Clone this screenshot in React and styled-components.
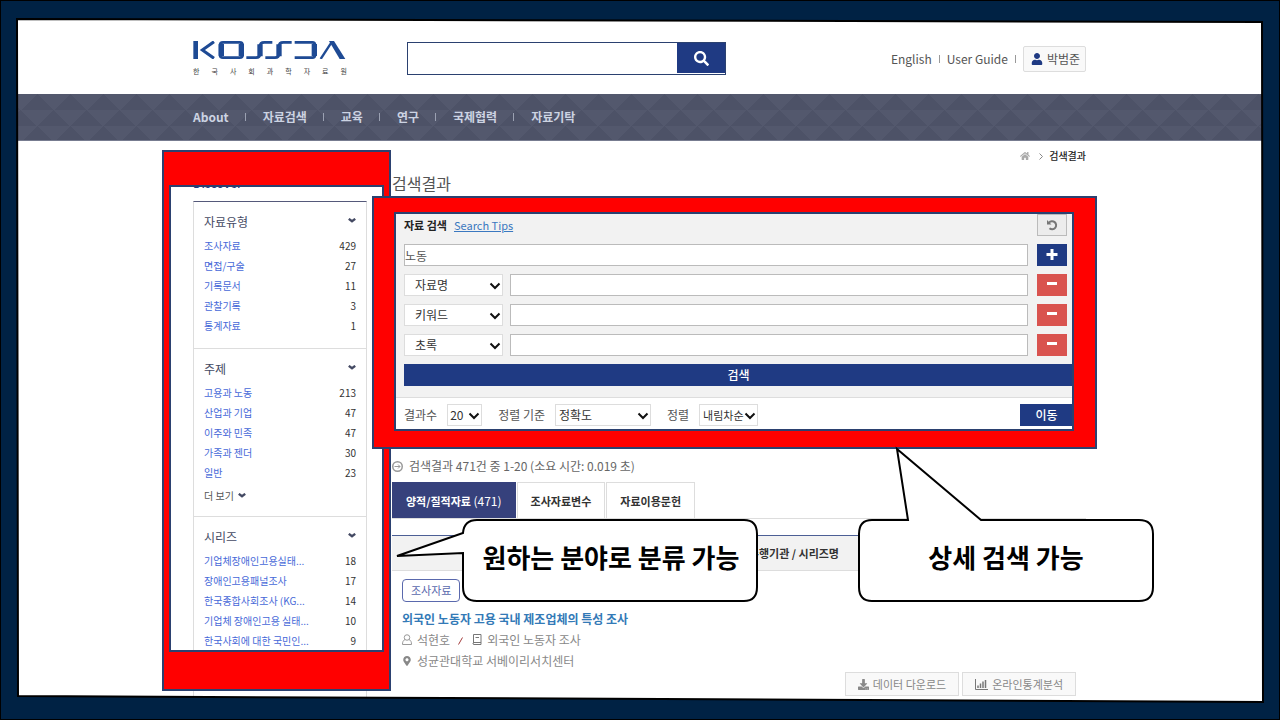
import React from "react";
import styled, { createGlobalStyle, css } from "styled-components";
import { FaSearch, FaUser, FaHome, FaDownload, FaMapMarkerAlt } from "react-icons/fa";

const navy = "#1f3a83";
const line = "#2b4170";

const Global = createGlobalStyle`
  *, *::before, *::after { box-sizing: border-box; }
  body { margin: 0; background: #002244; font-family: "Noto Sans CJK KR", sans-serif; font-size: 12px; line-height: 20px; color: #555; }
  button, input, select { font: inherit; color: inherit; margin: 0; padding: 0; border-radius: 0; }
  a { color: inherit; text-decoration: none; }
  ul { list-style: none; margin: 0; padding: 0; }
  h1, h2, h3, p { margin: 0; font-weight: 400; font-size: inherit; }
  svg { display: block; flex: none; }
`;

const Slide = styled.div`
  position: relative;
  display: flex;
  min-height: 100vh;
  padding: 18px;
  overflow: hidden;
`;
const Sheet = styled.div`
  flex: 1;
  display: flex;
  flex-direction: column;
  min-width: 0;
  background: #fff;
`;
const FrameArt = styled.svg`
  position: absolute;
  inset: 0;
  width: 100%;
  height: 100%;
  pointer-events: none;
  z-index: 5;
`;
const Container = styled.div`
  width: 100%;
  max-width: 894px;
  margin: 0 auto;
`;

const Header = styled.header`
  padding: 23px 0 18px;
`;
const HeaderRow = styled(Container)`
  display: flex;
  align-items: center;
  padding-right: 1px;
`;
const Brand = styled.a`
  width: 154px;
  margin-right: 60px;
`;
const BrandCaption = styled.span`
  display: flex;
  justify-content: space-between;
  margin-top: 7px;
  font-size: 7px;
  line-height: 10px;
  color: #444;
`;
const SiteSearch = styled.form`
  display: flex;
  align-items: flex-start;
  width: 319px;
  height: 33px;
  border: 1px solid ${line};
  input { flex: 1; min-width: 0; height: 31px; border: 0; padding: 0 8px; outline: 0; }
  button { width: 48px; height: 30px; border: 0; background: ${navy}; color: #fff; display: grid; place-items: center; }
`;
const Utility = styled.nav`
  display: flex;
  align-items: center;
  gap: 7px;
  margin-left: auto;
`;
const Tick = styled.i`
  width: 1px;
  height: 8px;
  margin-right: ${(p) => (p.$light ? 1 : 0)}px;
  background: ${(p) => (p.$light ? "#9ba1b2" : "#999")};
`;
const UserButton = styled.button`
  display: flex;
  align-items: center;
  gap: 4px;
  height: 26px;
  padding: 0 5px 0 7px;
  border: 1px solid #ddd;
  border-radius: 2px;
  background: #f9f9f9;
  svg { color: ${navy}; }
`;

const NavBar = styled.nav`
  --tri: conic-gradient(from 135deg at 50% 0, #4d5267 90deg, transparent 0);
  background-color: #53586d;
  background-image: var(--tri), var(--tri), var(--tri);
  background-size: 33px 16px;
  background-position: 3px 0, 19px 16px, 3px 32px;
  background-repeat: repeat-x;
  border-bottom: 1px solid #777c90;
`;
const NavRow = styled(Container)`
  display: flex;
  align-items: center;
  gap: 16px;
  height: 46px;
  font-weight: 700;
  color: #ccd3e2;
`;

const Crumbs = styled(Container)`
  display: flex;
  justify-content: flex-end;
  align-items: center;
  gap: 6px;
  padding: 5px 1px 0 0;
  font-size: 10px;
  color: #222;
  font-weight: 500;
  a { margin-right: 3px; color: #aaa; }
`;
const Body = styled(Container)`
  display: flex;
  gap: 25px;
  flex: 1;
`;

const Sidebar = styled.aside`
  position: relative;
  display: flex;
  flex-direction: column;
  width: 174px;
  padding-top: 7px;
`;
const SideTitle = styled.h2`
  height: 28px;
  font-weight: 500;
  color: ${navy};
`;
const FacetBox = styled.div`
  flex: 1;
  border: 1px solid #ddd;
  border-top-color: #55597a;
  border-bottom: 0;
`;
const Facet = styled.section`
  padding: 8px 10px 12px;
  border-bottom: 1px solid #ddd;
  &:last-child { border-bottom: 0; }
`;
const FacetHead = styled.h3`
  display: flex;
  justify-content: space-between;
  align-items: center;
  height: 24px;
  margin-bottom: 2px;
  color: #444a63;
  svg { margin-bottom: 4px; }
`;
const FacetRow = styled.li`
  display: flex;
  justify-content: space-between;
  font-size: 10px;
  color: #333;
  a { color: #4668d8; }
`;
const More = styled.button`
  display: flex;
  align-items: center;
  gap: 4px;
  height: 23px;
  margin-bottom: -2px;
  padding-top: 2px;
  border: 0;
  background: none;
  font-size: 10px;
`;

const Main = styled.main`
  position: relative;
  flex: 1;
  min-width: 0;
  padding-right: 1px;
`;
const PageTitle = styled.h1`
  height: 47px;
  padding-top: 7px;
  font-size: 16px;
`;

/* Red highlight frame with a dark outline on both edges */
const Highlight = styled.div`
  position: absolute;
  z-index: ${(p) => p.$z};
  border: solid #f00;
  outline: 2px solid ${line};
  pointer-events: none;
  box-shadow: inset 0 0 0 2px ${line};
`;
const FacetHighlight = styled(Highlight)`
  top: -14px;
  left: -29px;
  right: -22px;
  height: 537px;
  border-width: 33px 5px 37px;
`;
const SearchHighlight = styled(Highlight)`
  inset: -15px -9px -16px -18px;
  border-width: 14px 21px 16px 20px;
`;

const SearchPanel = styled.form`
  position: relative;
  height: 218px;
  background: #f2f2f2;
`;
const Fields = styled.div`
  display: flex;
  flex-direction: column;
  gap: 8px;
  padding: 1px 13px 11px 12px;
`;
const Row = styled.div`
  display: flex;
  align-items: center;
  gap: 7px;
  height: 22px;
  padding-right: 6px;
`;
const PanelTitle = styled(Row)`
  font-size: 11px;
  color: #222;
  font-weight: 700;
  a { color: #3a78c0; text-decoration: underline; font-weight: 400; margin-right: auto; }
`;
const Input = styled.input`
  flex: 1;
  min-width: 0;
  height: 22px;
  border: 1px solid #bbb;
  background: #fff;
  outline: 0;
`;
const Square = styled.button`
  display: grid;
  place-items: center;
  width: 30px;
  height: 22px;
  margin-left: 2px;
  border: 1px solid ${(p) => (p.$tone === "reset" ? "#bbb" : "transparent")};
  color: ${(p) => (p.$tone === "reset" ? "#777" : "#fff")};
  background: ${(p) => ({ reset: "#ececec", add: navy, remove: "#d9534f" })[p.$tone]};
`;
const Submit = styled.button`
  display: block;
  height: 22px;
  border: 0;
  background: ${navy};
  color: #fff;
  font-weight: 500;
  ${(p) => p.$end && css`width: 53px; margin-left: auto;`}
`;
const SelectBox = styled.span`
  position: relative;
  display: block;
  width: ${(p) => p.$w}px;
  select {
    appearance: none;
    width: 100%;
    height: 22px;
    padding-left: ${(p) => p.$pad}px;
    border: 1px solid #ddd;
    background: #fff;
    color: #333;
    font-size: ${(p) => (p.$small ? 11 : 12)}px;
    line-height: 18px;
    outline: 0;
  }
  svg { position: absolute; right: 2px; top: 8px; pointer-events: none; }
`;
const SortRow = styled.div`
  display: flex;
  align-items: center;
  height: 34px;
  padding: 0 13px 0 12px;
  border-top: 1px solid #ddd;
  background: #fff;
  label { margin-right: 10px; }
  span { margin-right: 16px; }
`;

const Count = styled.p`
  display: flex;
  gap: 6px;
  align-items: center;
  padding: 25px 0 6px;
  color: #666;
`;
const Tabs = styled.div`
  display: flex;
  gap: 1px;
  border-bottom: 1px solid #ddd;
`;
const Tab = styled.button`
  height: 36px;
  padding: 0 12px;
  border: 1px solid ${(p) => (p.$on ? "#36417c" : "#ddd")};
  border-bottom: 0;
  background: ${(p) => (p.$on ? "#36417c" : "#fff")};
  color: ${(p) => (p.$on ? "#fff" : "#333")};
  font-size: 11px;
  padding: 0 13px;
  font-weight: 700;
  span { font-size: 12px; font-weight: 400; }
`;
const Results = styled.table`
  width: 100%;
  margin-top: 16px;
  border-collapse: collapse;
  th {
    height: 35px;
    padding: 0 247px 0 0;
    border-top: 1px solid #4c5f95;
    border-bottom: 1px solid #ddd;
    background: #f2f2f2;
    color: #333;
    font-size: 11px;
    font-weight: 700;
    text-align: right;
  }
  td { padding: 8px 10px 0; }
`;
const Tag = styled.span`
  display: inline-block;
  height: 23px;
  padding: 0 8px;
  border: 1px solid #5a69ad;
  border-radius: 4px;
  font-size: 11px;
  line-height: 21px;
  color: #5a69ad;
`;
const ItemTitle = styled.a`
  display: block;
  margin-top: 7px;
  font-weight: 700;
  color: #337ab7;
`;
const Meta = styled.p`
  display: flex;
  align-items: center;
  gap: 5px;
  height: 21px;
  color: #888;
`;
const Slash = styled.svg`
  margin: 3px 4px 0 3px;
`;
const Actions = styled.div`
  display: flex;
  justify-content: flex-end;
  gap: 3px;
  margin-top: 1px;
`;
const Action = styled.button`
  display: flex;
  align-items: center;
  gap: 4px;
  height: 24px;
  padding: 0 12px;
  border: 1px solid #ddd;
  background: #f9f9f9;
  font-size: 11px;
  color: #888;
`;

const Callout = styled.div`
  position: absolute;
  z-index: 4;
  top: 353px;
  left: ${(p) => p.$left}px;
  display: grid;
  place-items: center;
  width: 296px;
  height: 83px;
  padding-bottom: 8px;
  font-size: 26px;
  line-height: 32px;
  font-weight: 700;
  color: #000;
  svg { position: absolute; inset: 0; overflow: visible; }
  span { position: relative; }
`;

const Chevron = () => (
  <svg width="8" height="5" viewBox="0 0 10 6" fill="none" stroke="#444a63" strokeWidth="3" aria-hidden="true">
    <path d="M1 1l4 3 4-3" />
  </svg>
);
const SelectArrow = () => (
  <svg width="12" height="8" viewBox="0 0 12 8" fill="none" stroke="#111" strokeWidth="2" aria-hidden="true">
    <path d="M1.5 1.5L6 6l4.5-4.5" />
  </svg>
);

const Logo = () => (
  <svg width="153" height="18" viewBox="583 123 457 54" fill="none" stroke="#1e4a94" aria-label="KOSSDA">
    <path d="M590 123v54" strokeWidth="14" />
    <path d="M645 125L610 150L645 175" strokeWidth="9" />
    <path d="M672 127h50q9 0 9 9v28q0 9-9 9h-50q-9 0-9-9v-28q0-9 9-9z" strokeWidth="8" />
    <path d="M667 132v36M727 132v36" strokeWidth="16" />
    <path d="M820 127h-24q-13 0-13 12v24q0 10-12 10h-29M878 127h-25q-13 0-13 12v24q0 10-12 10h-29" strokeWidth="8" />
    <path d="M783 133v36M840 133v36" strokeWidth="16" />
    <path d="M887 127h53q8 0 8 8v30q0 8-8 8h-53" strokeWidth="8" />
    <path d="M946 132v36" strokeWidth="16" />
    <path d="M965 177L997 128" strokeWidth="7" />
    <path d="M990 123h15l34 54h-17z" fill="#1e4a94" stroke="none" />
  </svg>
);

const ArrowCircle = () => (
  <svg width="11" height="11" viewBox="0 0 22 22" fill="none" stroke="#999" strokeWidth="3" aria-hidden="true">
    <circle cx="11" cy="11" r="9.5" />
    <path d="M5 11h11M12 7l4 4-4 4" strokeWidth="2" />
  </svg>
);
const Person = () => (
  <svg width="10" height="12" viewBox="0 0 20 24" fill="none" stroke="#999" strokeWidth="2" aria-hidden="true">
    <circle cx="10" cy="7" r="5.5" />
    <path d="M6 11c-4 2-5 5-5 10h18c0-5-1-8-5-10" />
  </svg>
);
const Book = () => (
  <svg width="10" height="11" viewBox="0 0 20 22" fill="none" stroke="#777" strokeWidth="2" aria-hidden="true">
    <path d="M3 1h15v20H3q-2-2 0-4h15M3 1v18M7 7h7" />
  </svg>
);
const Bars = () => (
  <svg width="13" height="11" viewBox="0 0 26 22" fill="none" stroke="#777" aria-hidden="true">
    <path d="M1 0v21h25" strokeWidth="2" />
    <path d="M6 18v-5M11 18V9M16 18V5M21 18V2" strokeWidth="3" />
  </svg>
);
const Undo = () => (
  <svg width="12" height="12" viewBox="0 0 24 24" fill="none" stroke="currentColor" strokeWidth="4" aria-hidden="true">
    <path d="M6 7.5A8 8 0 1 1 7 18.5" />
    <path d="M2 2v9h9z" fill="currentColor" stroke="none" />
  </svg>
);
const Plus = () => (
  <svg width="12" height="12" viewBox="0 0 12 12" stroke="currentColor" strokeWidth="3" aria-hidden="true">
    <path d="M0.5 5.5h11M6 0v11" />
  </svg>
);
const Minus = () => (
  <svg width="10" height="12" viewBox="0 0 10 12" stroke="currentColor" strokeWidth="3" aria-hidden="true">
    <path d="M0 4.5h10" />
  </svg>
);

const facets = [
  { title: "자료유형", rows: [["조사자료", 429], ["면접/구술", 27], ["기록문서", 11], ["관찰기록", 3], ["통계자료", 1]] },
  { title: "주제", more: true, rows: [["고용과 노동", 213], ["산업과 기업", 47], ["이주와 민족", 47], ["가족과 젠더", 30], ["일반", 23]] },
  { title: "시리즈", rows: [["기업체장애인고용실태...", 18], ["장애인고용패널조사", 17], ["한국종합사회조사 (KG...", 14], ["기업체 장애인고용 실태...", 10], ["한국사회에 대한 국민인...", 9]] },
];
const menu = ["About", "자료검색", "교육", "연구", "국제협력", "자료기탁"];

function Select({ id, label, value, w, pad, small }) {
  return (
    <SelectBox $w={w} $pad={pad} $small={small}>
      <select id={id} aria-label={label} defaultValue={value}>
        <option>{value}</option>
      </select>
      <SelectArrow />
    </SelectBox>
  );
}

export default function App() {
  return (
    <Slide>
      <Global />
      <Sheet>
        <Header>
          <HeaderRow>
            <Brand href="#">
              <Logo />
              <BrandCaption>{[..."한국사회과학자료원"].map((c, i) => <span key={i}>{c}</span>)}</BrandCaption>
            </Brand>
            <SiteSearch role="search">
              <input type="text" aria-label="통합검색" />
              <button type="button" aria-label="검색"><FaSearch size={15} /></button>
            </SiteSearch>
            <Utility>
              <a href="#">English</a>
              <Tick />
              <a href="#">User Guide</a>
              <Tick />
              <UserButton type="button"><FaUser size={12} />박범준</UserButton>
            </Utility>
          </HeaderRow>
        </Header>

        <NavBar>
          <NavRow>
            {menu.map((m, i) => (
              <React.Fragment key={m}>
                {i > 0 && <Tick $light />}
                <a href="#">{m}</a>
              </React.Fragment>
            ))}
          </NavRow>
        </NavBar>

        <Crumbs>
          <a href="#" aria-label="홈"><FaHome size={10} /></a>
          <svg width="4" height="7" viewBox="0 0 4 7" fill="none" stroke="#888" aria-hidden="true"><path d="M0.5 0.5l3 3-3 3" /></svg>
          <span>검색결과</span>
        </Crumbs>

        <Body>
          <Sidebar>
            <SideTitle>Discover</SideTitle>
            <FacetBox>
              {facets.map((f) => (
                <Facet key={f.title}>
                  <FacetHead>{f.title}<Chevron /></FacetHead>
                  <ul>
                    {f.rows.map(([name, n]) => (
                      <FacetRow key={name}><a href="#">{name}</a><span>{n}</span></FacetRow>
                    ))}
                  </ul>
                  {f.more && <More type="button">더 보기<Chevron /></More>}
                </Facet>
              ))}
            </FacetBox>
            <FacetHighlight $z={2} />
          </Sidebar>

          <Main>
            <PageTitle>검색결과</PageTitle>
            <SearchPanel>
              <Fields>
                <PanelTitle>
                  <span>자료 검색</span>
                  <a href="#">Search Tips</a>
                  <Square type="button" $tone="reset" aria-label="초기화"><Undo /></Square>
                </PanelTitle>
                <Row>
                  <Input type="text" defaultValue="노동" aria-label="검색어" />
                  <Square type="button" $tone="add" aria-label="추가"><Plus /></Square>
                </Row>
                {["자료명", "키워드", "초록"].map((f) => (
                  <Row key={f}>
                    <Select label="검색 항목" value={f} w={99} pad={10} />
                    <Input type="text" aria-label={f} />
                    <Square type="button" $tone="remove" aria-label="삭제"><Minus /></Square>
                  </Row>
                ))}
                <Submit type="button">검색</Submit>
              </Fields>
              <SortRow>
                <label htmlFor="rpp">결과수</label>
                <Select id="rpp" value="20" w={35} pad={2} />
                <label htmlFor="sort">정렬 기준</label>
                <Select id="sort" value="정확도" w={96} pad={3} />
                <label htmlFor="order">정렬</label>
                <Select id="order" value="내림차순" w={59} pad={3} small />
                <Submit type="button" $end>이동</Submit>
              </SortRow>
              <SearchHighlight $z={3} />
            </SearchPanel>

            <Count><ArrowCircle />검색결과 471건 중 1-20 (소요 시간: 0.019 초)</Count>
            <Tabs>
              <Tab type="button" $on>양적/질적자료 <span>(471)</span></Tab>
              <Tab type="button">조사자료변수</Tab>
              <Tab type="button">자료이용문헌</Tab>
            </Tabs>
            <Results>
              <thead><tr><th scope="col">수행기관 / 시리즈명</th></tr></thead>
              <tbody>
                <tr>
                  <td>
                    <Tag>조사자료</Tag>
                    <ItemTitle href="#">외국인 노동자 고용 국내 제조업체의 특성 조사</ItemTitle>
                    <Meta>
                      <Person />석현호
                      <Slash width="5" height="8" viewBox="0 0 5 8" stroke="#a33c3c" aria-hidden="true"><path d="M0.5 7.5L4.5 0.5" /></Slash>
                      <Book />외국인 노동자 조사
                    </Meta>
                    <Meta><FaMapMarkerAlt size={10} />성균관대학교 서베이리서치센터</Meta>
                    <Actions>
                      <Action type="button"><FaDownload size={11} />데이터 다운로드</Action>
                      <Action type="button"><Bars />온라인통계분석</Action>
                    </Actions>
                  </td>
                </tr>
              </tbody>
            </Results>

            <Callout $left={71}>
              <svg width="296" height="83" viewBox="0 0 296 83" fill="#fff" stroke="#000" strokeWidth="2" aria-hidden="true">
                <path d="M14 1H281Q294 1 294 15V68Q294 82 281 82H14Q0 82 0 68V34L-66 37L0 14Q1 1 14 1Z" />
              </svg>
              <span>원하는 분야로 분류 가능</span>
            </Callout>
            <Callout $left={466}>
              <svg width="296" height="83" viewBox="0 0 296 83" fill="#fff" stroke="#000" strokeWidth="2" aria-hidden="true">
                <path d="M14 1H50L39 -70L123 1H281Q295 1 295 15V68Q295 82 281 82H14Q1 82 1 68V15Q1 1 14 1Z" />
              </svg>
              <span>상세 검색 가능</span>
            </Callout>
          </Main>
        </Body>
      </Sheet>
      <FrameArt viewBox="0 0 1280 720" preserveAspectRatio="none" aria-hidden="true">
        <path fill="#002244" fillRule="evenodd" d="M0 0H1280V720H0ZM17 19L1262 22L1263 702L18 696Z" />
        <path fill="none" stroke="#000" strokeWidth="2" d="M17 19L1262 22L1263 702L18 696Z" />
        <path fill="none" stroke="#000" strokeWidth="2" d="M0 0H1280V720H0Z" />
      </FrameArt>
    </Slide>
  );
}
